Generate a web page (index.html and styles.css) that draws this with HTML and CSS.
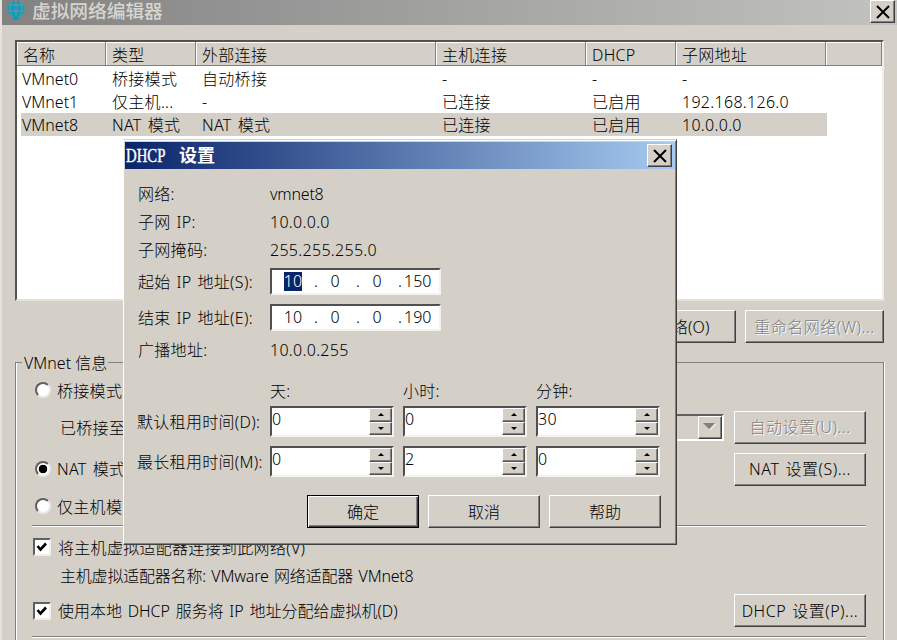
FILE: index.html
```html
<!DOCTYPE html>
<html lang="zh-Hans">
<head>
  <meta charset="UTF-8">
  <meta name="viewport" content="width=device-width, initial-scale=1.0">
  <title>虚拟网络编辑器</title>
  <link rel="stylesheet" href="styles.css">
</head>
<body>

  <div class="window">
    <div class="titlebar">
      <svg class="globe" width="20" height="21" viewBox="0 0 20 21">
        <circle cx="10" cy="8" r="8.8" fill="#179ab5"/>
        <path d="M2 4h16M1 10h18M10 0v17M6 0c-3 5-3 11 0 16M14 0c3 5 3 11 0 16" fill="none" stroke="#6f9aa8" stroke-width="1"/>
        <path d="M7 15h6v4H7z" fill="#179ab5"/>
      </svg>
      <span class="title">虚拟网络编辑器</span>
      <button class="close"><svg width="14" height="14" viewBox="0 0 14 14"><path d="M1 1l12 12M13 1L1 13"/></svg></button>
    </div>

    <div class="list">
      <div class="row head">
        <span>名称</span><span>类型</span><span>外部连接</span><span>主机连接</span><span>DHCP</span><span>子网地址</span><span></span>
      </div>
      <div class="row">
        <span>VMnet0</span><span>桥接模式</span><span>自动桥接</span><span>-</span><span>-</span><span>-</span>
      </div>
      <div class="row">
        <span>VMnet1</span><span>仅主机...</span><span>-</span><span>已连接</span><span>已启用</span><span>192.168.126.0</span>
      </div>
      <div class="row selected">
        <span>VMnet8</span><span>NAT 模式</span><span>NAT 模式</span><span>已连接</span><span>已启用</span><span>10.0.0.0</span>
      </div>
    </div>

    <div class="list-buttons">
      <button class="btn remove">移除网络(O)</button>
      <button class="btn rename disabled">重命名网络(W)...</button>
    </div>

    <fieldset class="info">
      <legend>VMnet 信息</legend>
      <div class="line bridge"><i class="radio"></i><span>桥接模式</span></div>
      <div class="line bridged-to">
        <span>已桥接至</span>
        <div class="combo"><b><svg width="14" height="8" viewBox="0 0 14 8"><path d="M7 7l6-6" fill="none" stroke="#fff"/><path d="M0 0h12L6 6z" fill="#808080"/></svg></b></div>
        <button class="btn disabled">自动设置(U)...</button>
      </div>
      <div class="line nat"><i class="radio checked"></i><span>NAT 模式</span><button class="btn">NAT 设置(S)...</button></div>
      <div class="line hostonly"><i class="radio"></i><span>仅主机模式</span></div>
      <div class="divider"></div>
      <div class="line adapter">
        <i class="check"><svg width="12" height="12" viewBox="0 0 12 12"><path d="M1.5 5l3 3.5L10 2.5"/></svg></i>
        <span>将主机虚拟适配器连接到此网络(V)</span>
      </div>
      <div class="line adapter-name"><span>主机虚拟适配器名称: VMware 网络适配器 VMnet8</span></div>
      <div class="line dhcp">
        <i class="check"><svg width="12" height="12" viewBox="0 0 12 12"><path d="M1.5 5l3 3.5L10 2.5"/></svg></i>
        <span>使用本地 DHCP 服务将 IP 地址分配给虚拟机(D)</span>
        <button class="btn">DHCP 设置(P)...</button>
      </div>
      <div class="divider last"></div>
    </fieldset>
  </div>

  <div class="dialog">
    <div class="titlebar">
      <span class="title"><span class="latin">DHCP</span>设置</span>
      <button class="close"><svg width="14" height="14" viewBox="0 0 14 14"><path d="M1 1l12 12M13 1L1 13"/></svg></button>
    </div>

    <div class="fields">
      <label>网络:</label><span class="net">vmnet8</span>
      <label>子网 IP:</label><span>10.0.0.0</span>
      <label>子网掩码:</label><span>255.255.255.0</span>
      <label>起始 IP 地址(S):</label>
      <div class="ip"><span><mark>10</mark></span><i>.</i><span>0</span><i>.</i><span>0</span><i>.</i><span>150</span></div>
      <label>结束 IP 地址(E):</label>
      <div class="ip"><span>10</span><i>.</i><span>0</span><i>.</i><span>0</span><i>.</i><span>190</span></div>
      <label>广播地址:</label><span>10.0.0.255</span>
    </div>

    <div class="lease">
      <span></span><span>天:</span><span>小时:</span><span>分钟:</span>
      <label>默认租用时间(D):</label>
      <div class="spin"><span>0</span><b class="up"></b><b class="down"></b></div>
      <div class="spin"><span>0</span><b class="up"></b><b class="down"></b></div>
      <div class="spin"><span>30</span><b class="up"></b><b class="down"></b></div>
      <label>最长租用时间(M):</label>
      <div class="spin"><span>0</span><b class="up"></b><b class="down"></b></div>
      <div class="spin"><span>2</span><b class="up"></b><b class="down"></b></div>
      <div class="spin"><span>0</span><b class="up"></b><b class="down"></b></div>
    </div>

    <div class="actions">
      <button class="btn default">确定</button>
      <button class="btn">取消</button>
      <button class="btn">帮助</button>
    </div>
  </div>

</body>
</html>
```
FILE: styles.css
```css
* {
  box-sizing: border-box;
}
body {
  margin: 0;
  width: 897px;
  height: 640px;
  overflow: hidden;
  background: #d4d0c8;
  color: #000;
  font: 300 16px/22px "Noto Sans", "Noto Sans CJK SC", sans-serif;
  letter-spacing: 0.3px;
  word-spacing: 1.5px;
  white-space: nowrap;
}
button {
  font: inherit;
  color: inherit;
  padding: 0;
}
.window {
  height: 640px;
  border-left: 2px solid #e6e3dd;
  overflow: hidden;
}

/* title bars */
.titlebar {
  display: flex;
  align-items: center;
  letter-spacing: 0;
  word-spacing: 0;
}
.window > .titlebar {
  height: 25px;
  padding: 0 2px 2px 4px;
  background: linear-gradient(to right, #828282, #c2c2c0);
  color: #d8d5ce;
}
.globe {
  flex: none;
  margin-right: 6px;
}
.title {
  flex: 1;
  font-size: 18.7px;
  font-weight: 500;
}
.window .title {
  padding-bottom: 1px;
}
.close {
  width: 25px;
  height: 23px;
  display: flex;
  align-items: center;
  justify-content: center;
  background: #d4d0c8;
  border: 1px solid;
  border-color: #fff #404040 #404040 #fff;
  box-shadow: inset -1px -1px #808080;
}
.close path {
  stroke: #000;
  stroke-width: 2;
}

/* network list */
.list {
  margin: 15px 13px 0 13px;
  height: 261px;
  background: #fff;
  border: 2px solid;
  border-color: #55534f #f0eeea #e4e1da #55534f;
}
.row {
  display: grid;
  grid-template-columns: 85px 90px 240px 150px 90px 151px;
  width: 806px;
  height: 23px;
  margin-left: 4px;
  line-height: 25px;
}
.row span {
  padding-left: 6px;
}
.row span:first-child {
  padding-left: 1px;
  letter-spacing: 0;
}
.row.head {
  grid-template-columns: 89px 90px 240px 150px 90px 150px 1fr;
  width: auto;
  height: 25px;
  margin-left: 0;
}
.row.head span {
  height: 24px;
  padding-left: 6px;
  line-height: 26px;
  background: #d4d0c8;
  border-right: 1px solid #808080;
  border-bottom: 1px solid #808080;
  box-shadow: inset 1px 1px #fff;
}
.row.selected {
  background: #d4d0c8;
}

.btn {
  width: 132px;
  height: 33px;
  letter-spacing: 0.5px;
  word-spacing: 1.5px;
  background: #d4d0c8;
  border: 1px solid;
  border-color: #fff #404040 #404040 #fff;
  box-shadow: inset -1px -1px #808080;
}
.btn.disabled {
  color: #808080;
  text-shadow: 1px 1px #fff;
}
.list-buttons {
  display: flex;
  justify-content: flex-end;
  gap: 9px;
  padding: 9px 13px 0 0;
}
.list-buttons .rename {
  width: 139px;
}
.list-buttons .remove {
  width: 139px;
  letter-spacing: 0.1px;
}

/* VMnet info */
.info {
  margin: 8px 13px 0;
  padding: 0 17px 0 16px;
  height: 320px;
  border: 1px solid #808080;
  box-shadow: inset 1px 0 #fff, 1px 0 #fff;
}
.info legend {
  height: 22px;
  margin-left: -10px;
  padding: 0 1px 0 2px;
  letter-spacing: 0;
  word-spacing: 0;
  line-height: 24px;
  background: #d4d0c8;
}
.line {
  display: flex;
  align-items: center;
}
.line span {
  padding-top: 2px;
}
.line .btn {
  margin-left: auto;
}
.line.bridge {
  height: 34px;
}
.line.bridged-to {
  height: 40px;
  padding-left: 28px;
}
.line.bridged-to span,
.line.hostonly span {
  padding-top: 1px;
}
.line.nat {
  height: 44px;
}
.line.nat span {
  padding-top: 0;
}
.line.hostonly {
  height: 30px;
}
.line.adapter {
  height: 39px;
}
.line.adapter-name {
  height: 20px;
  padding-left: 28px;
  letter-spacing: -0.2px;
}
.line.adapter-name span,
.line.dhcp span {
  padding-top: 0;
}
.line.dhcp {
  height: 49px;
}
.line.dhcp > span {
  letter-spacing: 0;
}
.divider {
  height: 2px;
  margin-top: 4px;
  border-top: 1px solid #808080;
  border-bottom: 1px solid #fff;
}
.divider.last {
  margin-top: 1px;
}
.radio {
  width: 16px;
  height: 16px;
  margin: 0 6px 0 3px;
  border-radius: 50%;
  background: #fff;
  border: 2px solid;
  border-color: #606060 #eceae6 #eceae6 #606060;
}
.radio.checked {
  background: radial-gradient(circle, #000 4px, #fff 4.6px);
}
.check {
  width: 18px;
  height: 18px;
  margin: 0 7px 0 1px;
  padding: 1px;
  line-height: 0;
  background: #fff;
  border: 2px solid;
  border-color: #606060 #f0eeea #f0eeea #606060;
}
.check path {
  fill: none;
  stroke: #000;
  stroke-width: 2.6;
}
.combo {
  display: flex;
  justify-content: flex-end;
  margin-left: auto;
  margin-right: 10px;
  width: 340px;
  height: 27px;
  border: 2px solid;
  border-color: #606060 #fff #fff #606060;
}
.combo b {
  width: 24px;
  display: flex;
  align-items: center;
  justify-content: center;
  border: 1px solid;
  border-color: #fff #404040 #404040 #fff;
  box-shadow: inset -1px -1px #808080;
}
.combo + .btn {
  margin-left: 0;
}

/* DHCP dialog */
.dialog {
  position: absolute;
  left: 123px;
  top: 139px;
  width: 554px;
  height: 406px;
  padding: 2px 1px 0 1px;
  background: #d4d0c8;
  border: 1px solid;
  border-color: #d4d0c8 #404040 #404040 #fff;
  box-shadow: inset 0 1px #fff, inset -1px -1px #808080;
}
.dialog .titlebar {
  height: 27px;
  padding: 0 3px 0 1px;
  background: linear-gradient(to right, #0a246a, #a6caf0);
  color: #fff;
}
.dialog .title {
  font-size: 18px;
  font-weight: 700;
}
.latin {
  display: inline-block;
  width: 53px;
  font-family: "Liberation Serif", serif;
  font-weight: 400;
  -webkit-text-stroke: 0.4px #fff;
  transform: scaleX(0.82);
  transform-origin: left;
}
.fields {
  display: grid;
  grid-template-columns: 133px 171px;
  grid-template-rows: 28px 28px 28px 35px 37px 28px;
  align-items: center;
  padding: 11px 0 0 12px;
}
.fields label {
  padding-left: 1px;
}
.fields .net {
  letter-spacing: -0.2px;
}
.ip {
  display: flex;
  align-items: center;
  height: 27px;
  padding: 0 0 2px 4px;
  letter-spacing: 0;
  line-height: 20px;
  background: #fff;
  border: 2px solid;
  border-color: #505050 #f4f2ee #f4f2ee #505050;
}
.ip span {
  width: 34px;
  text-align: center;
}
.ip span:last-child {
  padding-left: 2px;
  text-align: left;
}
.ip i {
  width: 8px;
  font-style: normal;
  text-align: right;
}
.ip mark {
  display: inline-block;
  height: 19px;
  line-height: 19px;
  background: #0a246a;
  color: #fff;
}
.lease {
  display: grid;
  grid-template-columns: 124px 124px 124px 124px;
  grid-template-rows: 26px 31px 31px;
  column-gap: 9px;
  row-gap: 9px;
  align-items: center;
  padding: 7px 0 0 12px;
}
.lease > span {
  align-self: start;
  line-height: 40px;
}
.spin {
  display: grid;
  grid-template-columns: 1fr 23px;
  grid-template-rows: 1fr 1fr;
  height: 31px;
  background: #fff;
  border: 2px solid;
  border-color: #505050 #f4f2ee #f4f2ee #505050;
}
.spin span {
  grid-row: 1 / 3;
}
.spin b {
  display: flex;
  align-items: center;
  justify-content: center;
  background: #d4d0c8;
  border: 1px solid;
  border-color: #fff #505050 #505050 #fff;
  box-shadow: inset -1px -1px #808080;
}
.spin b::before {
  content: "";
  border: 3px solid transparent;
}
.spin .up::before {
  border-top: 0;
  border-bottom-color: #000;
}
.spin .down::before {
  border-bottom: 0;
  border-top-color: #000;
}
.actions {
  display: flex;
  justify-content: flex-end;
  gap: 9px;
  padding: 18px 14px 0 0;
}
.actions .btn {
  width: 112px;
  letter-spacing: 0;
}
.actions .default {
  border-color: #000;
  box-shadow: inset 1px 1px #fff, inset -1px -1px #404040, inset -2px -2px #808080;
}
```
